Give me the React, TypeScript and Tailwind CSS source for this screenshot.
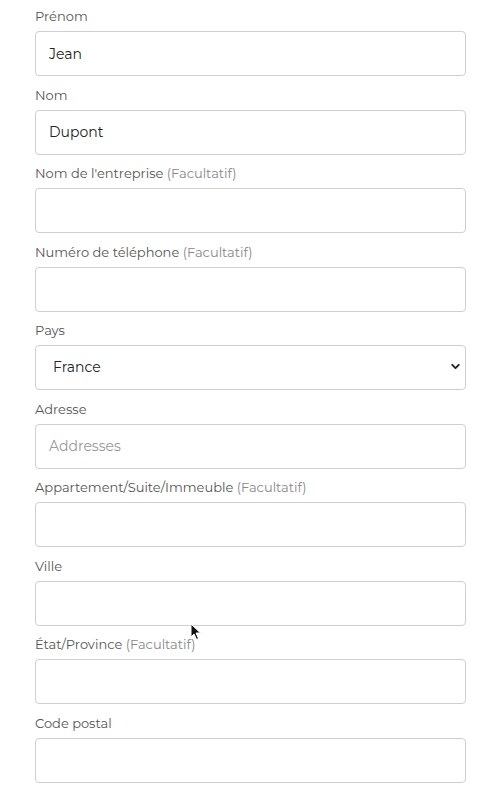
import { ChevronDown } from "lucide-react";

type Field = {
  label: string;
  optional?: boolean;
  value?: string;
  placeholder?: string;
  select?: boolean;
};

const fields: Field[] = [
  { label: "Prénom", value: "Jean" },
  { label: "Nom", value: "Dupont" },
  { label: "Nom de l'entreprise", optional: true },
  { label: "Numéro de téléphone", optional: true },
  { label: "Pays", value: "France", select: true },
  { label: "Adresse", placeholder: "Addresses" },
  { label: "Appartement/Suite/Immeuble", optional: true },
  { label: "Ville" },
  { label: "État/Province", optional: true },
  { label: "Code postal" },
];

// curseur de souris au-dessus du formulaire
function Pointer() {
  return (
    <svg className="pointer-events-none absolute left-[190px] top-[623px]" width="12" height="18" viewBox="0 0 12 18">
      <path d="M1 1 L1 14 L4 11 L6.5 16.5 L8.5 15.5 L6 10 L10.5 10 Z" fill="#111" stroke="#fff" strokeWidth="1" strokeLinejoin="round" />
    </svg>
  );
}

export default function App() {
  return (
    <div className="relative min-h-[790px] w-[498px] bg-white pl-[35px] pr-[32px] pt-[6px] font-['Montserrat','Open_Sans',sans-serif]">
      {fields.map((f) => (
        <div key={f.label} className="mb-[8.5px] flex flex-col">
          <label className="mb-[5px] h-[20px] text-[13px] leading-[20px] text-[#555]">
            {f.label}
            {f.optional && <span className="text-[#888]"> (Facultatif)</span>}
          </label>
          {f.select ? (
            <div className="relative">
              <select
                defaultValue={f.value}
                className="h-[45px] w-full appearance-none rounded-[4px] border border-[#cfcfcf] bg-white pl-[17px] text-[14px] text-[#222] outline-none"
              >
                <option>France</option>
                <option>Belgique</option>
                <option>Suisse</option>
              </select>
              <ChevronDown className="pointer-events-none absolute right-[4.5px] top-[14.5px] size-[13px] text-[#222]" strokeWidth={3.5} />
            </div>
          ) : (
            <input
              defaultValue={f.value}
              placeholder={f.placeholder}
              className="h-[45px] w-full rounded-[4px] border border-[#cfcfcf] bg-white px-[13px] text-[14px] text-[#222] outline-none placeholder:text-[#999]"
            />
          )}
        </div>
      ))}
      <Pointer />
    </div>
  );
}
